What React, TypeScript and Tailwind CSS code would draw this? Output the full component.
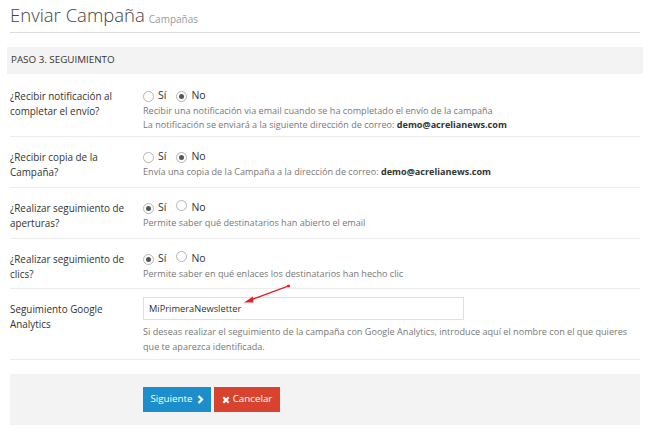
import React from "react";

function Radio({ checked }: { checked: boolean }) {
  return (
    <span className="inline-flex items-center justify-center w-[11px] h-[11px] rounded-full border border-[#b5b5b5] bg-white">
      {checked && <span className="w-[5px] h-[5px] rounded-full bg-[#555]" />}
    </span>
  );
}

function RadioPair({ si }: { si: boolean }) {
  return (
    <div className="flex items-center h-[16px] text-[10.5px] text-[#333]">
      <Radio checked={si} />
      <span className="ml-[4px]">Sí</span>
      <span className="ml-[10px]"><Radio checked={!si} /></span>
      <span className="ml-[4px]">No</span>
    </div>
  );
}

function Row({
  label,
  children,
  h,
}: {
  label: React.ReactNode;
  children: React.ReactNode;
  h: string;
}) {
  return (
    <div className={`flex border-b border-[#ececec] ${h}`}>
      <div className="w-[133px] shrink-0 text-[9.9px] leading-[15px] text-[#333] pr-2 pt-[1px]">{label}</div>
      <div className="flex-1">{children}</div>
    </div>
  );
}

export default function App() {
  return (
    <div className="w-[650px] h-[434px] bg-white px-[10px] font-['Open_Sans',sans-serif] overflow-hidden">
      <div className="h-[33px] border-b border-[#dcdcdc] flex items-end pb-[8px]">
        <span className="text-[18.5px] text-[#444] font-light leading-none">Enviar Campaña</span>
        <span className="text-[10px] text-[#9a9a9a] ml-[4px] leading-none">Campañas</span>
      </div>
      <div className="-mx-[3px] mt-[14px] h-[27px] bg-[#f3f3f3] flex items-center pl-[4px] text-[9.8px] text-[#333]">
        PASO 3. SEGUIMIENTO
      </div>
      <div className="mt-[2px]">
        <Row
          h="h-[61px] pt-[12px]"
          label={<>¿Recibir notificación al completar el envío?</>}
        >
          <RadioPair si={false} />
          <div className="text-[9.1px] leading-[14px] text-[#777]">
            Recibir una notificación via email cuando se ha completado el envío de la campaña
            <br />
            La notificación se enviará a la siguiente dirección de correo:{" "}
            <b className="text-[#333] font-bold">demo@acrelianews.com</b>
          </div>
        </Row>
        <Row h="h-[51px] pt-[12px]" label={<>¿Recibir copia de la Campaña?</>}>
          <RadioPair si={false} />
          <div className="text-[9.1px] leading-[14px] text-[#777]">
            Envía una copia de la Campaña a la dirección de correo:{" "}
            <b className="text-[#333] font-bold">demo@acrelianews.com</b>
          </div>
        </Row>
        <Row h="h-[51px] pt-[12px]" label={<>¿Realizar seguimiento de aperturas?</>}>
          <RadioPair si={true} />
          <div className="text-[9.1px] leading-[14px] text-[#777]">
            Permite saber qué destinatarios han abierto el email
          </div>
        </Row>
        <Row h="h-[50px] pt-[12px]" label={<>¿Realizar seguimiento de clics?</>}>
          <RadioPair si={true} />
          <div className="text-[9.1px] leading-[14px] text-[#777]">
            Permite saber en qué enlaces los destinatarios han hecho clic
          </div>
        </Row>
        <div className="relative flex border-b border-[#ececec] h-[71px] pt-[8px]">
          <div className="w-[133px] shrink-0 text-[9.9px] leading-[15px] text-[#333] pt-[5px]">
            Seguimiento Google Analytics
          </div>
          <div className="flex-1">
            <div className="w-[321px] h-[23px] border border-[#e0e0e0] flex items-center pl-[5px] text-[9.3px] text-[#333]">
              MiPrimeraNewsletter
            </div>
            <div className="mt-[4px] text-[9.1px] leading-[15px] text-[#777] w-[488px]">
              Si deseas realizar el seguimiento de la campaña con Google Analytics, introduce aquí el nombre con el que quieres que te aparezca identificada.
            </div>
          </div>
          <svg className="absolute left-[221px] top-[-6px]" width="70" height="26" viewBox="0 0 70 26">
            <circle cx="57.5" cy="3" r="1.6" fill="#e0242c" />
            <line x1="57" y1="3.2" x2="18" y2="17.5" stroke="#e0242c" strokeWidth="1.4" />
            <polygon points="13,19.5 22,13.5 22.5,19.5" fill="#e0242c" />
          </svg>
        </div>
        <div className="mt-[14px] h-[51px] bg-[#f3f3f3] flex items-center pl-[133px] gap-[3px]">
          <div className="h-[25px] w-[68px] bg-[#1b8ecb] text-white text-[9.8px] flex items-center justify-center gap-[4px]">
            Siguiente
            <svg width="7" height="9" viewBox="0 0 7 9"><path d="M1.5 1 L5 4.5 L1.5 8" stroke="white" strokeWidth="2.2" fill="none" /></svg>
          </div>
          <div className="h-[25px] w-[66px] bg-[#d8432f] text-white text-[9.8px] flex items-center justify-center gap-[3px]">
            <svg width="8" height="8" viewBox="0 0 8 8"><path d="M1.3 1.3 L6.7 6.7 M6.7 1.3 L1.3 6.7" stroke="white" strokeWidth="2.2" /></svg>
            Cancelar
          </div>
        </div>
      </div>
    </div>
  );
}
